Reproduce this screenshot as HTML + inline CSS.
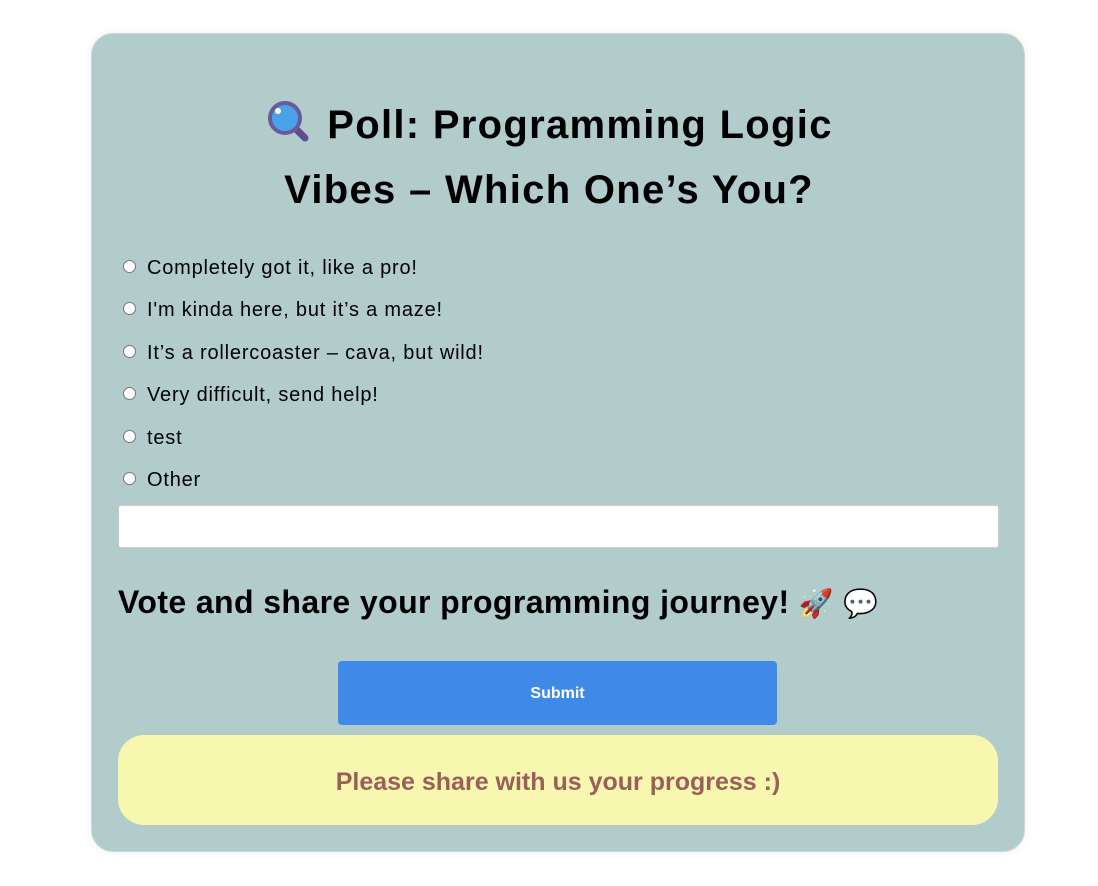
<!DOCTYPE html>
<html><head><style>
body{margin:0;background:#fff;font-family:"Liberation Sans",sans-serif;}
.card{position:absolute;left:91px;top:33px;width:932px;height:817px;background:#b2cbcb;border-radius:22px;border:1px solid #c9d9d9;box-shadow:0 0 10px rgba(0,0,0,0.06);}
h1{position:absolute;left:0;right:0;top:93px;margin:0;text-align:center;font-size:40px;line-height:65px;font-weight:bold;color:#000;letter-spacing:1.3px;}
.opt{position:absolute;left:123px;font-size:20px;color:#000;height:24px;line-height:24px;letter-spacing:0.8px;}
.opt i{display:inline-block;width:11px;height:11px;border:1px solid #777;border-radius:50%;background:#fff;vertical-align:middle;margin-right:11px;position:relative;top:-2px;}
.inp{position:absolute;left:118px;top:505px;width:879px;height:41px;background:#fff;border:1px solid #ccc;border-radius:3px;}
h2{position:absolute;left:118px;top:580px;margin:0;font-size:32px;line-height:44px;font-weight:bold;letter-spacing:0.4px;}
.btn{position:absolute;left:338px;top:661px;width:439px;height:64px;background:#3f8ae6;border-radius:4px;color:#fff;font-weight:bold;font-size:16px;text-align:center;line-height:66px;}
.note{position:absolute;left:118px;top:735px;width:880px;height:90px;background:#f7f7b0;border-radius:26px;color:#9b5f5a;font-weight:bold;font-size:25px;text-align:center;line-height:94px;}
</style></head><body>
<div class="card"></div>
<h1><svg width="46" height="44" viewBox="0 0 46 44" style="vertical-align:-4px;margin-right:16px"><line x1="26" y1="26" x2="40" y2="40" stroke="#5e4d8d" stroke-width="7" stroke-linecap="round"/><circle cx="20" cy="20" r="15" fill="#4aa3e8" stroke="#6a5a9c" stroke-width="4"/><circle cx="13" cy="13" r="3" fill="#fff"/></svg>Poll: Programming Logic<br>Vibes – Which One’s You?</h1>
<div class="opt" style="top:256px"><i></i>Completely got it, like a pro!</div>
<div class="opt" style="top:298px"><i></i>I'm kinda here, but it’s a maze!</div>
<div class="opt" style="top:341px"><i></i>It’s a rollercoaster – cava, but wild!</div>
<div class="opt" style="top:383px"><i></i>Very difficult, send help!</div>
<div class="opt" style="top:426px"><i></i>test</div>
<div class="opt" style="top:468px"><i></i>Other</div>
<div class="inp"></div>
<h2>Vote and share your programming journey! <span style="font-size:28px">🚀</span> <span style="font-size:28px">💬</span></h2>
<div class="btn">Submit</div>
<div class="note">Please share with us your progress :)</div>
</body></html>
